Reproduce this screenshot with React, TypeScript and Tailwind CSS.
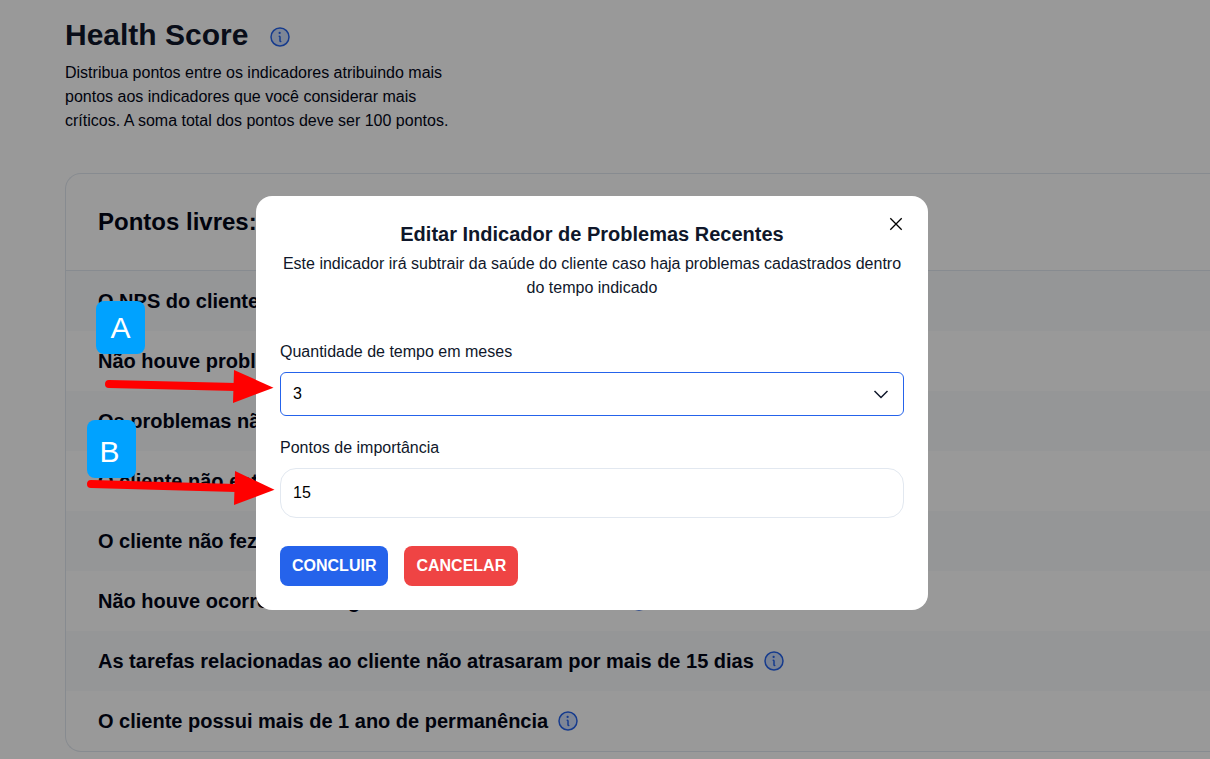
import { PiInfoDuotone } from "react-icons/pi";

type Indicator = { label: string; info: boolean };

const indicators: Indicator[] = [
  { label: "O NPS do cliente", info: false },
  { label: "Não houve problemas", info: false },
  { label: "Os problemas não foram graves", info: false },
  { label: "O cliente não está em atraso", info: false },
  { label: "O cliente não fez reclamações", info: false },
  { label: "Não houve ocorrências negativas nos últimos 3 meses", info: true },
  { label: "As tarefas relacionadas ao cliente não atrasaram por mais de 15 dias", info: true },
  { label: "O cliente possui mais de 1 ano de permanência", info: true },
];

function InfoButton() {
  return (
    <button type="button" aria-label="Mais informações" className="block shrink-0 text-[#2563eb]">
      <PiInfoDuotone className="size-6" />
    </button>
  );
}

function ScorePage() {
  return (
    <main className="pt-[17px] pl-[65px]">
      <div className="flex items-end gap-5">
        <h1 className="text-3xl font-bold text-[#0f172a]">Health Score</h1>
        <div className="pb-1">
          <InfoButton />
        </div>
      </div>
      <p className="mt-2 max-w-96 text-base">
        Distribua pontos entre os indicadores atribuindo mais pontos aos indicadores que você
        considerar mais críticos. A soma total dos pontos deve ser 100 pontos.
      </p>
      <section className="mt-10 overflow-hidden rounded-l-2xl border-y border-l border-[#e2e8f0]">
        <h2 className="border-b border-[#e2e8f0] p-8 text-2xl font-bold">Pontos livres:</h2>
        <ul>
          {indicators.map((item) => (
            <li
              key={item.label}
              className="flex items-center gap-2 px-8 py-4 text-xl font-bold odd:bg-[#f8fafc]"
            >
              <span>{item.label}</span>
              {item.info && <InfoButton />}
            </li>
          ))}
        </ul>
      </section>
    </main>
  );
}

function EditDialog() {
  return (
    <div className="absolute inset-0 flex items-start justify-center bg-black/40 pt-[196px] pr-[26px]">
      <div
        role="dialog"
        aria-modal="true"
        aria-labelledby="dialog-title"
        className="relative w-full max-w-2xl rounded-2xl bg-white p-6 text-[#0f172a]"
      >
        <button type="button" aria-label="Fechar" className="absolute top-4 right-5 text-black">
          <svg viewBox="0 0 24 24" className="size-6" fill="none" stroke="currentColor" strokeWidth="1.3">
            <path d="M6.300 6.300l11.400 11.400M17.700 6.300L6.300 17.700" />
          </svg>
        </button>
        <h2 id="dialog-title" className="text-center text-xl font-bold">
          Editar Indicador de Problemas Recentes
        </h2>
        <p className="mt-1 text-center">
          Este indicador irá subtrair da saúde do cliente caso haja problemas cadastrados dentro do
          tempo indicado
        </p>
        <form className="mt-10" onSubmit={(e) => e.preventDefault()}>
          <label htmlFor="months" className="block">
            Quantidade de tempo em meses
          </label>
          <div className="relative mt-2">
            <select
              id="months"
              defaultValue="3"
              className="block h-11 w-full appearance-none rounded-md border border-[#2563eb] bg-white px-3 text-black outline-none"
            >
              <option>1</option>
              <option>2</option>
              <option>3</option>
              <option>6</option>
              <option>12</option>
            </select>
            <svg
              viewBox="0 0 24 24"
              className="pointer-events-none absolute top-[10px] right-[11px] size-6"
              fill="none"
              stroke="currentColor"
              strokeWidth="1.5"
            >
              <path d="M5.500 9l6.500 6.500L18.500 9" />
            </svg>
          </div>
          <label htmlFor="points" className="mt-5 block">
            Pontos de importância
          </label>
          <input
            id="points"
            type="text"
            inputMode="numeric"
            defaultValue="15"
            className="mt-2 block h-[50px] w-full rounded-2xl border border-[#e2e8f0] px-3 text-black outline-none"
          />
          <div className="mt-7 flex gap-4">
            <button type="submit" className="h-10 rounded-lg bg-[#2563eb] px-3 font-bold text-white">
              CONCLUIR
            </button>
            <button type="button" className="h-10 rounded-lg bg-[#ef4444] px-3 font-bold text-white">
              CANCELAR
            </button>
          </div>
        </form>
      </div>
    </div>
  );
}

function Annotations() {
  return (
    <>
      <div className="absolute top-[301px] left-[96px] flex h-[53px] w-[49px] items-end justify-center rounded-lg bg-[#00a2ff] pb-2 text-3xl text-white">
        A
      </div>
      <div className="absolute top-[420px] left-[87px] flex h-[58px] w-[49px] items-end justify-center rounded-lg bg-[#00a2ff] pr-1 pb-2 text-3xl text-white">
        B
      </div>
      <svg
        viewBox="80 360 200 150"
        className="pointer-events-none absolute top-[360px] left-[80px] h-[150px] w-[200px]"
        fill="#ff0000"
        stroke="#ff0000"
        aria-hidden="true"
      >
        <path d="M109 384L236 387" strokeWidth="8" strokeLinecap="round" />
        <path d="M234 370L273.500 387.700L233 403Z" stroke="none" />
        <path d="M91 484L236 488" strokeWidth="8" strokeLinecap="round" />
        <path d="M235 471L274.500 489.700L234 505Z" stroke="none" />
      </svg>
    </>
  );
}

export default function App() {
  return (
    <div className="relative min-h-screen overflow-hidden bg-white font-['Liberation_Sans',Arial,sans-serif] text-base text-[#020617]">
      <ScorePage />
      <EditDialog />
      <Annotations />
    </div>
  );
}
